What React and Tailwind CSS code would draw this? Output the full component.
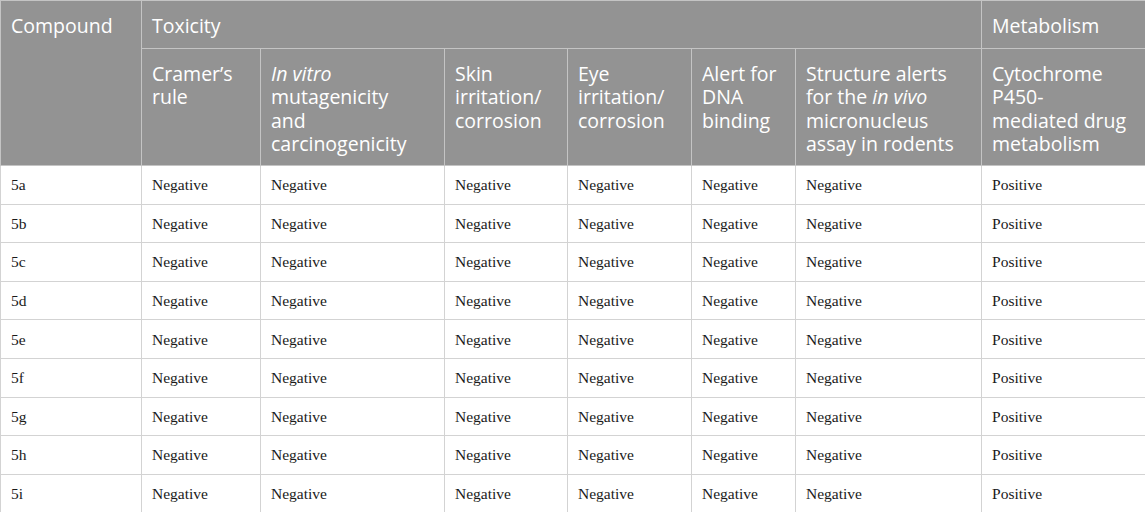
const cols = [
  { w: "w-[141px]" },
  { w: "w-[119px]" },
  { w: "w-[184px]" },
  { w: "w-[123px]" },
  { w: "w-[124px]" },
  { w: "w-[104px]" },
  { w: "w-[186px]" },
  { w: "w-[164px]" },
];

const rows = ["5a", "5b", "5c", "5d", "5e", "5f", "5g", "5h", "5i"];

export default function App() {
  const th = "border border-[#c4c4c4] px-[10px] pt-[13px] text-left align-top font-normal whitespace-nowrap";
  const td = "border border-[#d3d3d3] px-[10px] align-middle";

  return (
    <div className="w-[1145px] h-[512px] overflow-hidden bg-white">
      <table className="w-[1145px] table-fixed border-collapse">
        <colgroup>
          {cols.map((c, i) => (
            <col key={i} className={c.w} />
          ))}
        </colgroup>
        <thead className="bg-[#939393] text-white text-[19.5px] leading-[23.3px] font-['Open_Sans',sans-serif]">
          <tr className="h-[48px]">
            <th rowSpan={2} className={th}>Compound</th>
            <th colSpan={6} className={th}>Toxicity</th>
            <th className={th}>Metabolism</th>
          </tr>
          <tr className="h-[117px]">
            <th className={th}>Cramer’s<br />rule</th>
            <th className={th}>
              <i>In vitro</i>
              <br />mutagenicity
              <br />and
              <br />carcinogenicity
            </th>
            <th className={th}>Skin<br />irritation/<br />corrosion</th>
            <th className={th}>Eye<br />irritation/<br />corrosion</th>
            <th className={th}>Alert for<br />DNA<br />binding</th>
            <th className={th}>
              Structure alerts
              <br />for the <i>in vivo</i>
              <br />micronucleus
              <br />assay in rodents
            </th>
            <th className={th}>Cytochrome<br />P450-<br />mediated drug<br />metabolism</th>
          </tr>
        </thead>
        <tbody className="text-[#1a1a1a] text-[15.5px] font-['Liberation_Serif',serif]">
          {rows.map((r) => (
            <tr key={r} className="h-[38.6px]">
              <td className={td}>{r}</td>
              <td className={td}>Negative</td>
              <td className={td}>Negative</td>
              <td className={td}>Negative</td>
              <td className={td}>Negative</td>
              <td className={td}>Negative</td>
              <td className={td}>Negative</td>
              <td className={td}>Positive</td>
            </tr>
          ))}
        </tbody>
      </table>
    </div>
  );
}
